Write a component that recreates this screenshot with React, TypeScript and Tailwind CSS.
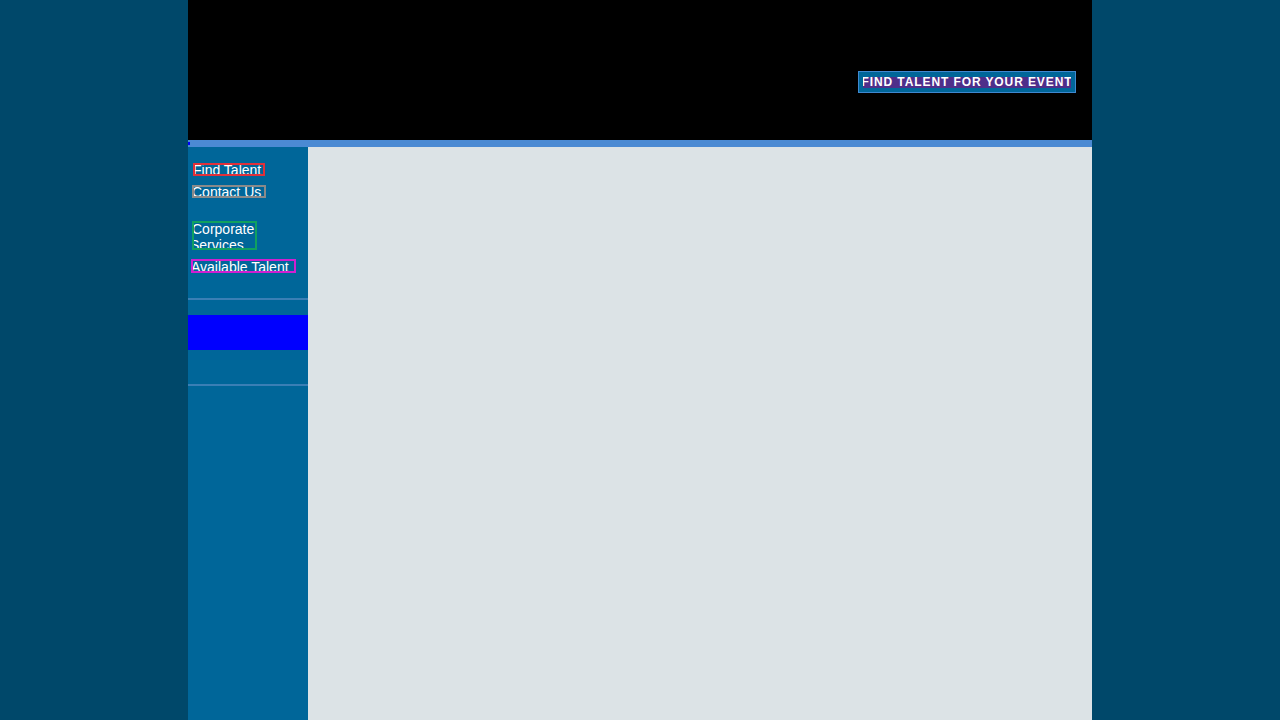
export default function App() {
  return (
    <div className="min-h-[720px] w-full bg-[#00486a] flex justify-center" style={{ fontFamily: '"Liberation Sans", Arial, sans-serif' }}>
      <div className="w-[904px] flex flex-col min-h-[720px]">
        {/* header */}
        <div className="h-[140px] bg-black flex items-start justify-end pt-[71px] pr-[16px]">
          <div className="border border-[#3f88cf] bg-[#006699] w-[218px] h-[22px] flex items-center justify-center">
            <span className="bg-[#4f2f8a] h-[11px] w-[208px] overflow-hidden flex items-center justify-center text-white text-[12px] font-bold leading-none tracking-[0.9px] whitespace-nowrap">
              FIND TALENT FOR YOUR EVENT
            </span>
          </div>
        </div>
        <div className="h-[7px] bg-[#4b8ad3] relative">
          <div className="absolute left-0 top-[2px] w-[2px] h-[3px] bg-[#0000ff]" />
        </div>
        <div className="flex flex-1">
          {/* sidebar */}
          <div className="w-[120px] bg-[#006699] flex flex-col">
            <div className="flex flex-col items-start pl-[4px] pt-[16px] h-[151px] text-white text-[14px]">
              <a className="ml-[1px] border-2 border-[#e0303a] h-[13px] w-[72px] overflow-hidden leading-[11px] -indent-[2px] whitespace-nowrap">Find Talent</a>
              <a className="mt-[9px] border-2 border-[#8a8a8a] h-[13px] w-[74px] overflow-hidden leading-[11px] -indent-[2px] whitespace-nowrap">Contact Us</a>
              <a className="mt-[23px] border-2 border-[#10a060] h-[29px] w-[65px] overflow-hidden leading-[17px] -mt-0 -indent-[2px]"><span className="block -mt-[2px]">Corporate</span><span className="block -mt-[1px] -ml-[2px]">Services</span></a>
              <a className="mt-[9px] -ml-[1px] border-2 border-[#d020d0] h-[14px] w-[105px] overflow-hidden leading-[12px] -indent-[2px] whitespace-nowrap">Available Talent</a>
            </div>
            <div className="h-[2px] bg-[#3a7fb5]" />
            <div className="h-[15px]" />
            <div className="h-[35px] bg-[#0000ff]" />
            <div className="h-[34px]" />
            <div className="h-[2px] bg-[#3a7fb5]" />
          </div>
          {/* main */}
          <div className="flex-1 bg-[#dce3e6]" />
        </div>
      </div>
    </div>
  );
}
